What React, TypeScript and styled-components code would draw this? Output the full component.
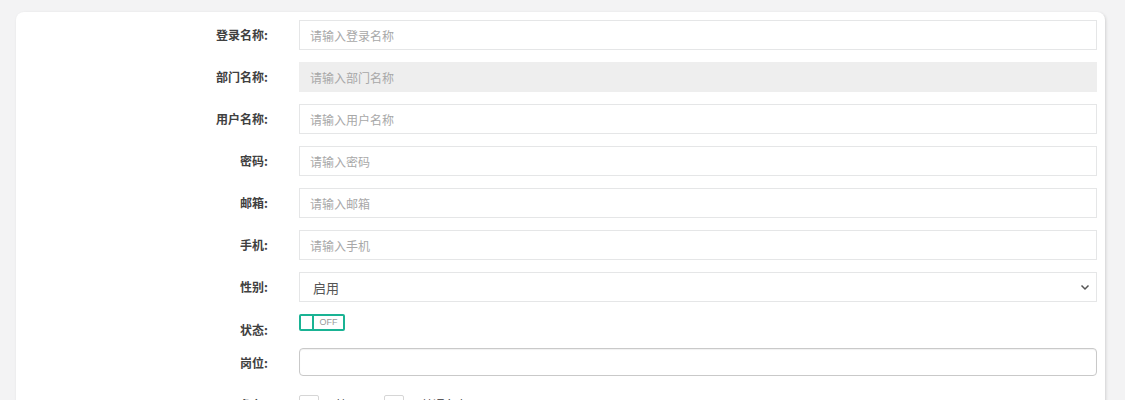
import React from "react";
import styled, { createGlobalStyle } from "styled-components";

const Global = createGlobalStyle`
  html, body { margin: 0; padding: 0; background: #f3f3f4; }
  body { font-family: "Noto Sans CJK SC", "Noto Sans", sans-serif; font-size: 12px; color: #676a6c; }
  * { box-sizing: border-box; }
`;

const Card = styled.div`
  margin: 12px 20px 0 16px;
  background: #fff;
  border-radius: 8px;
  box-shadow: 1px 1px 3px rgba(0,0,0,0.14);
  padding: 8px 8px 20px 0;
  height: 420px;
`;

const Row = styled.div<{ $mb?: number }>`
  display: grid;
  grid-template-columns: 252px 1fr;
  column-gap: 31px;
  margin-bottom: ${p => p.$mb ?? 12}px;
  align-items: start;
`;

const Label = styled.label<{ $pt?: number }>`
  text-align: right;
  font-weight: bold;
  color: #404040;
  font-size: 12px;
  line-height: 17px;
  padding-top: ${p => p.$pt ?? 6}px;
`;

const Input = styled.input<{ $disabled?: boolean }>`
  height: 30px;
  width: 100%;
  border: 1px solid ${p => (p.$disabled ? "#eeeeee" : "#e5e6e7")};
  background: ${p => (p.$disabled ? "#eeeeee" : "#fff")};
  padding: 0 10px;
  font-family: inherit;
  font-size: 12px;
  color: #333;
  outline: none;
  &::placeholder { color: #a8a8a8; }
`;

const SelectBox = styled.div`
  height: 30px;
  border: 1px solid #e5e6e7;
  display: flex;
  align-items: center;
  justify-content: space-between;
  padding: 0 6px 0 13px;
  font-size: 13px;
  color: #555;
`;

const Switch = styled.div`
  width: 46px;
  height: 17px;
  border: 2px solid #1ab394;
  border-radius: 2px;
  display: flex;
  align-items: stretch;
`;

const Knob = styled.div`
  width: 13px;
  border-right: 2px solid #1ab394;
`;

const SwitchText = styled.span`
  flex: 1;
  font-size: 9px;
  line-height: 13px;
  color: #999;
  text-align: center;
  font-family: "Liberation Sans", sans-serif;
`;

const PostInput = styled.input`
  height: 28px;
  width: 100%;
  border: 1px solid #c9c9c9;
  border-radius: 4px;
  box-shadow: inset 0 1px 1px rgba(0,0,0,0.06);
  outline: none;
`;

const Checks = styled.div`
  display: flex;
  align-items: center;
  padding-top: 7px;
`;

const Box = styled.span`
  width: 20px;
  height: 20px;
  border: 1px solid #d6d6d6;
  border-radius: 2px;
  margin-right: 17px;
`;

const CheckText = styled.span`
  font-size: 12px;
  line-height: 20px;
  color: #333;
  margin-right: 12px;
`;

const fields = [
  { label: "登录名称:", ph: "请输入登录名称" },
  { label: "部门名称:", ph: "请输入部门名称", disabled: true },
  { label: "用户名称:", ph: "请输入用户名称" },
  { label: "密码:", ph: "请输入密码" },
  { label: "邮箱:", ph: "请输入邮箱" },
  { label: "手机:", ph: "请输入手机" },
];

export default function App() {
  return (
    <>
      <Global />
      <Card>
        {fields.map(f => (
          <Row key={f.label}>
            <Label>{f.label}</Label>
            <Input placeholder={f.ph} $disabled={f.disabled} readOnly={f.disabled} />
          </Row>
        ))}
        <Row>
          <Label>性别:</Label>
          <SelectBox>
            <span>启用</span>
            <svg width="10" height="10" viewBox="0 0 10 10">
              <path d="M1.5 3.5 L5 7 L8.5 3.5" fill="none" stroke="#555" strokeWidth="1.5" />
            </svg>
          </SelectBox>
        </Row>
        <Row $mb={10}>
          <Label $pt={7}>状态:</Label>
          <Switch>
            <Knob />
            <SwitchText>OFF</SwitchText>
          </Switch>
        </Row>
        <Row>
          <Label>岗位:</Label>
          <PostInput />
        </Row>
        <Row>
          <Label $pt={8}>角色:</Label>
          <Checks>
            <Box />
            <CheckText>管理员</CheckText>
            <Box />
            <CheckText>普通角色</CheckText>
          </Checks>
        </Row>
      </Card>
    </>
  );
}
